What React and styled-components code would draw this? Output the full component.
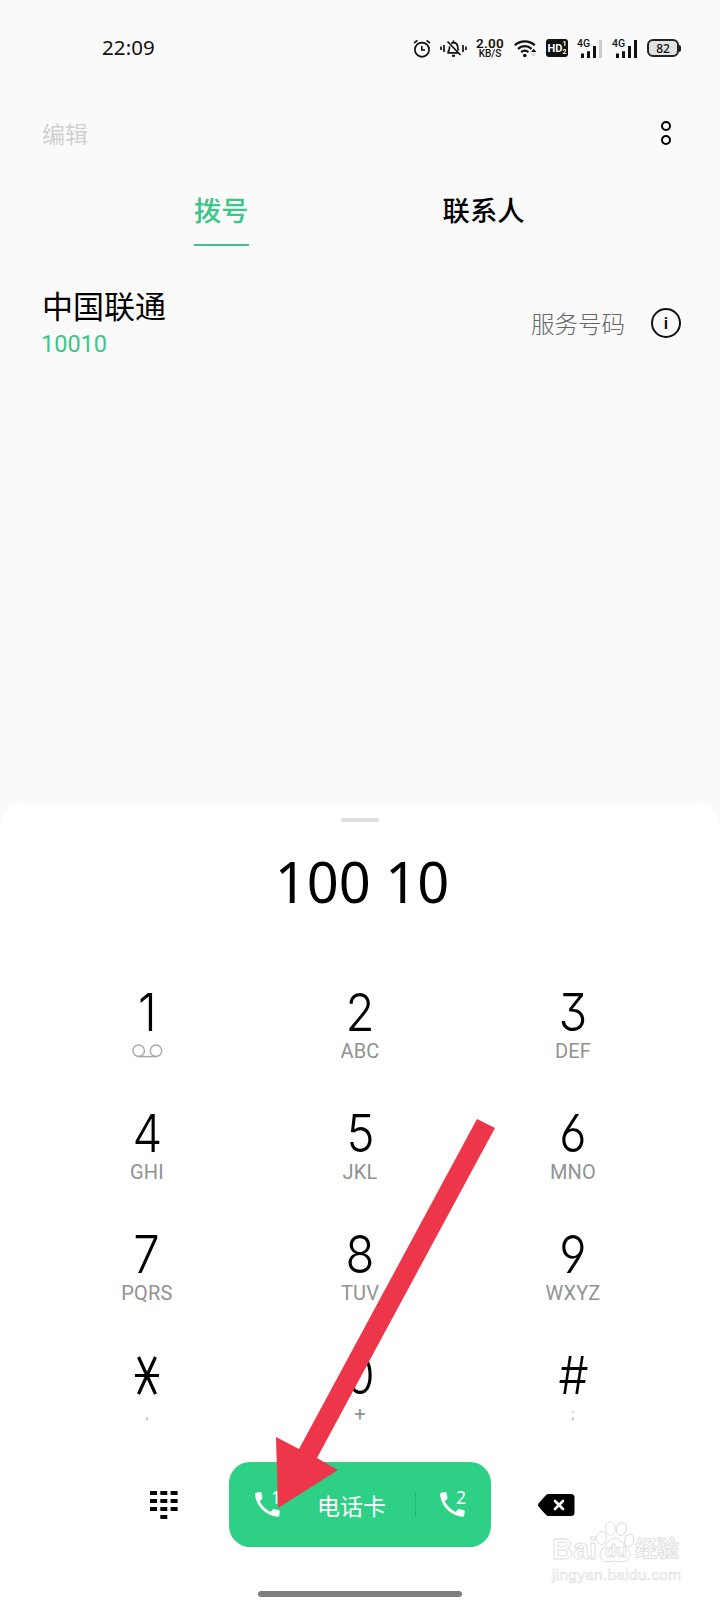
import React from 'react';
import styled, { createGlobalStyle } from 'styled-components';

const keys = [
  { digit: '1', letters: 'voicemail' },
  { digit: '2', letters: 'ABC' },
  { digit: '3', letters: 'DEF' },
  { digit: '4', letters: 'GHI' },
  { digit: '5', letters: 'JKL' },
  { digit: '6', letters: 'MNO' },
  { digit: '7', letters: 'PQRS' },
  { digit: '8', letters: 'TUV' },
  { digit: '9', letters: 'WXYZ' },
  { digit: '*', letters: ',' },
  { digit: '0', letters: '+' },
  { digit: '#', letters: ';' },
];

const AlarmIcon = () => (
  <svg width="18" height="19" viewBox="0 0 18 19" fill="none" stroke="#111" strokeWidth="1.7">
    <circle cx="9" cy="10.7" r="7.1" />
    <path d="M8.8 7v4h3.2M1 4.2 4.4 1.4M17 4.2l-3.4-2.8" />
  </svg>
);

const MutedBellIcon = () => (
  <svg width="27" height="19" viewBox="0 0 27 19" fill="none" stroke="#111" strokeWidth="1.7">
    <path d="M1 7.500v3.500M4 6v7M26 7.500v3.500M23 6v7M7.300 13.800h11.500M18.500 11.500c-.8-1.500-.6-3-.9-4.500-.4-2-2-3.300-4.100-3.300-.8 0-1.700.3-2.300.8M9.600 7.400c-.3 2.200 0 4.200-1.800 6.200M7.500 2.500l13 13.500M13.500 4V1.500" />
    <path d="M12 16.800h3" strokeWidth="2" />
  </svg>
);

const WifiIcon = () => (
  <svg width="23" height="19" viewBox="0 0 23 19" fill="none" stroke="#111" strokeWidth="2.3">
    <path d="M.8 6.200c5.800-5.200 14.200-5.200 20 0M4 9.800c4-3.500 9.600-3.500 13.600 0M7.200 13.200c2.100-1.800 5.100-1.800 7.200 0" />
    <circle cx="10.8" cy="16.500" r="1.800" fill="#111" stroke="none" />
    <path d="m17 13 2.700-3.300L22.400 13z" fill="#111" stroke="none" />
    <path d="m17 14.500 2.700 3.300 2.700-3.300z" fill="#d5d5d5" stroke="none" />
  </svg>
);

const SignalBars = ({ last }) => (
  <svg width="25" height="19" viewBox="0 0 25 19">
    <path d="M4 14.500h3V19H4zM10 12.300h3V19h-3zM16 7h3v12h-3z" fill="#111" />
    <path d="M22 1h3v18h-3z" fill={last} />
  </svg>
);

const VoicemailIcon = () => (
  <svg width="31" height="14" viewBox="0 0 31 14" fill="none" stroke="#aaa" strokeWidth="1.5">
    <circle cx="6.700" cy="6.700" r="5.700" />
    <circle cx="24" cy="6.700" r="5.700" />
    <path d="M6.700 12.600H24" />
  </svg>
);

const HandsetIcon = () => (
  <svg width="25" height="25" viewBox="0 0 25 25" fill="#fff">
    <path d="M1.200.7 5.100.1c.8-.1 1.300.3 1.500 1l.9 4.600c.1.600 0 1-.4 1.400L4.700 9.300c2.400 4.700 6.200 8.500 10.900 10.800l2.200-2.500c.4-.4.900-.6 1.500-.4l4.300.9c.7.2 1.100.7 1.100 1.400l-.4 4c-.1.800-.6 1.300-1.400 1.300C10.800 23.800.900 14.200.1 2.100c0-.8.300-1.300 1.100-1.400z" />
  </svg>
);

const KeypadIcon = () => (
  <svg width="28" height="28" viewBox="0 0 28 28" fill="#000">
    {[0, 8, 16].map((y) => [0, 10.3, 20.6].map((x) => (
      <rect key={`${x}-${y}`} x={x} y={y} width="7" height="4" />
    )))}
    <rect x="10.3" y="24" width="7" height="4" />
  </svg>
);

const BackspaceIcon = () => (
  <svg width="37" height="22" viewBox="0 0 37 22">
    <path d="M10.500 0H33q3.500 0 3.500 3.500v15Q36.500 22 33 22H10.500Q9 22 7.800 20.700L.7 12.700Q-.5 11 .7 9.300L7.800 1.300Q9 0 10.500 0z" fill="#000" />
    <path d="m17 7 8 8m0-8-8 8" stroke="#fff" strokeWidth="2.600" strokeLinecap="round" />
  </svg>
);

const PawLogo = () => (
  <svg width="40" height="44" viewBox="0 0 40 44" fill="#fff" stroke="#dcdcdc" strokeWidth="1">
    <ellipse cx="6.500" cy="18" rx="5" ry="6.500" />
    <ellipse cx="15.500" cy="8.500" rx="5" ry="6.700" />
    <ellipse cx="26.500" cy="9" rx="5" ry="6.500" transform="rotate(14 26.500 9)" />
    <ellipse cx="34" cy="20.500" rx="4.700" ry="6.300" transform="rotate(14 34 20.500)" />
    <path d="M20 18c5 0 7 4.500 10.500 8.500 3 3.300 5.500 6 4 10.500-1.500 5-6.500 5.500-14.500 4-8 1.500-13 1-14.500-4-1.500-4.500 1-7 4-10.300C13 22.500 15 18 20 18z" />
  </svg>
);

const App = () => (
  <Screen>
    <GlobalStyle />
    <StatusBar>
      <Clock>22:09</Clock>
      <StatusIcons>
        <AlarmIcon />
        <MutedBellIcon />
        <NetSpeed>
          <SpeedValue>2.00</SpeedValue>
          <SpeedUnit>KB/S</SpeedUnit>
        </NetSpeed>
        <WifiIcon />
        <HdBadge>
          HD
          <HdSims>
            <span>1</span>
            <span>2</span>
          </HdSims>
        </HdBadge>
        <Signal>
          <SignalTag>4G</SignalTag>
          <SignalBars last="#ccc" />
        </Signal>
        <Signal>
          <SignalTag>4G</SignalTag>
          <SignalBars last="#111" />
        </Signal>
        <Battery>
          <BatteryBody>82</BatteryBody>
          <BatteryTip />
        </Battery>
      </StatusIcons>
    </StatusBar>

    <Toolbar>
      <EditButton>编辑</EditButton>
      <MoreButton>
        <MoreDot />
        <MoreDot />
      </MoreButton>
    </Toolbar>

    <Tabs>
      <Tab $active>拨号</Tab>
      <Tab>联系人</Tab>
    </Tabs>

    <ContactRow>
      <ContactInfo>
        <ContactName>中国联通</ContactName>
        <ContactNumber>10010</ContactNumber>
      </ContactInfo>
      <ContactType>服务号码</ContactType>
      <InfoButton>i</InfoButton>
    </ContactRow>

    <DialPanel>
      <Handle />
      <DialedNumber>100 10</DialedNumber>
      <Keypad>
        {keys.map((key) => (
          <Key key={key.digit}>
            {key.digit === '*' ? (
              <StarSlot>
                <svg width="26" height="39" viewBox="0 0 26 39" stroke="#000" strokeWidth="3.200">
                  <path d="M1 19.500h24M4.500 1l17 37M21.500 1l-17 37" />
                </svg>
              </StarSlot>
            ) : (
              <Digit>{key.digit}</Digit>
            )}
            <Letters $faint={key.letters === ',' || key.letters === ';'}>
              {key.letters === 'voicemail' ? <VoicemailIcon /> : key.letters}
            </Letters>
          </Key>
        ))}
      </Keypad>
      <ActionRow>
        <ActionSlot>
          <KeypadIcon />
        </ActionSlot>
        <CallButton>
          <CallSim>
            <HandsetIcon />
            <SimIndex>1</SimIndex>
          </CallSim>
          <CallLabel>电话卡</CallLabel>
          <CallDivider />
          <CallSim>
            <HandsetIcon />
            <SimIndex>2</SimIndex>
          </CallSim>
        </CallButton>
        <ActionSlot>
          <BackspaceIcon />
        </ActionSlot>
      </ActionRow>
      <HomeBar />
    </DialPanel>

    <Arrow width="222" height="392" viewBox="0 0 222 392">
      <path d="M203 1 221 10 43 340 64 352 4 390 2 319 25 331z" fill="#ee364a" />
    </Arrow>

    <Watermark>
      <WatermarkTop>
        <WatermarkWord>Bai</WatermarkWord>
        <WatermarkPaw>
          <PawLogo />
          <WatermarkDu>du</WatermarkDu>
        </WatermarkPaw>
        <WatermarkCjk>经验</WatermarkCjk>
      </WatermarkTop>
      <WatermarkUrl>jingyan.baidu.com</WatermarkUrl>
    </Watermark>
  </Screen>
);

const GlobalStyle = createGlobalStyle`
  * {
    box-sizing: border-box;
  }

  body {
    margin: 0;
    background: #fafafa;
  }

  svg {
    display: block;
    flex-shrink: 0;
  }
`;

const Screen = styled.div`
  position: relative;
  display: flex;
  flex-direction: column;
  width: 720px;
  height: 1600px;
  overflow: hidden;
  background: #fafafa;
  color: #000;
  font-family: Roboto, 'Noto Sans CJK SC', sans-serif;
`;

const StatusBar = styled.header`
  display: flex;
  align-items: center;
  justify-content: space-between;
  height: 95px;
  padding: 1px 39px 0 102px;
`;

const Clock = styled.span`
  padding-bottom: 2px;
  font-family: 'Noto Sans', sans-serif;
  font-size: 20.5px;
  letter-spacing: 0.1px;
  color: #111;
`;

const StatusIcons = styled.div`
  display: flex;
  align-items: center;
  gap: 9px;
`;

const NetSpeed = styled.div`
  display: flex;
  flex-direction: column;
  align-items: center;
  width: 28px;
  margin-right: 1px;
  color: #111;
  font-family: Roboto, sans-serif;
`;

const SpeedValue = styled.span`
  font-size: 13.5px;
  font-weight: 600;
  line-height: 11px;
  letter-spacing: 0.3px;
`;

const SpeedUnit = styled.span`
  font-size: 10px;
  font-weight: 500;
  line-height: 10px;
`;

const HdBadge = styled.div`
  display: flex;
  align-items: center;
  justify-content: center;
  width: 22px;
  height: 18px;
  border-radius: 3px;
  background: #111;
  color: #fff;
  font-size: 11px;
  font-weight: 700;
`;

const HdSims = styled.span`
  display: flex;
  flex-direction: column;
  font-size: 7px;
  line-height: 8px;
`;

const Signal = styled.div`
  position: relative;
  margin-right: 1px;
`;

const SignalTag = styled.span`
  position: absolute;
  top: 0;
  left: 0;
  color: #111;
  font-size: 10.5px;
  font-weight: 500;
  line-height: 10px;
`;

const Battery = styled.div`
  display: flex;
  align-items: center;
`;

const BatteryBody = styled.div`
  display: flex;
  align-items: center;
  justify-content: center;
  width: 32px;
  height: 18px;
  border: 2px solid #222;
  border-radius: 6px;
  background: #e2e2e2;
  color: #111;
  font-family: 'Noto Sans', sans-serif;
  font-size: 12px;
  font-weight: 500;
`;

const BatteryTip = styled.div`
  width: 2px;
  height: 7px;
  border-radius: 0 2px 2px 0;
  background: #222;
`;

const Toolbar = styled.div`
  display: flex;
  align-items: center;
  justify-content: space-between;
  height: 76px;
  padding: 0 49px 0 42px;
`;

const EditButton = styled.span`
  color: #d0d0d0;
  font-size: 23px;
`;

const MoreButton = styled.div`
  display: flex;
  flex-direction: column;
  gap: 4px;
`;

const MoreDot = styled.span`
  width: 10px;
  height: 10px;
  border: 2.5px solid #000;
  border-radius: 50%;
`;

const Tabs = styled.nav`
  display: flex;
  gap: 194px;
  height: 76px;
  padding-left: 194px;
`;

const Tab = styled.span`
  align-self: flex-start;
  height: 75px;
  padding-top: 21px;
  border-bottom: 2px solid ${(props) => (props.$active ? '#42c28a' : 'transparent')};
  color: ${(props) => (props.$active ? '#3cc687' : '#000')};
  font-size: 27.3px;
  font-weight: 500;
  line-height: 40px;
`;

const ContactRow = styled.div`
  display: flex;
  align-items: center;
  height: 151px;
  padding: 0 39px 0 42px;
`;

const ContactInfo = styled.div`
  display: flex;
  flex: 1;
  flex-direction: column;
  padding-top: 3px;
`;

const ContactName = styled.span`
  font-size: 31px;
  font-weight: 400;
  line-height: 40px;
`;

const ContactNumber = styled.span`
  margin-left: -1px;
  color: #3cc68a;
  font-size: 23.5px;
  line-height: 32px;
`;

const ContactType = styled.span`
  margin-right: 26px;
  color: #666;
  font-size: 23.5px;
  font-weight: 300;
`;

const InfoButton = styled.span`
  display: flex;
  align-items: center;
  justify-content: center;
  width: 30px;
  height: 30px;
  border: 2px solid #111;
  border-radius: 50%;
  font-size: 17px;
  font-weight: 500;
`;

const DialPanel = styled.section`
  display: flex;
  flex-direction: column;
  align-items: center;
  height: 796px;
  margin-top: auto;
  border-radius: 24px 24px 0 0;
  background: #fff;
`;

const Handle = styled.div`
  width: 38px;
  height: 4px;
  margin-top: 14px;
  border-radius: 1px;
  background: #e0e0e0;
`;

const DialedNumber = styled.div`
  height: 148px;
  padding: 19px 0 0 4px;
  font-family: 'Noto Sans', sans-serif;
  font-size: 56px;
  line-height: 80px;
`;

const Keypad = styled.div`
  display: grid;
  grid-template-columns: repeat(3, 1fr);
  grid-auto-rows: 121px;
  width: 639px;
`;

const Key = styled.div`
  display: flex;
  flex-direction: column;
  align-items: center;
  padding-top: 16px;
`;

const Digit = styled.span`
  font-family: Inter, sans-serif;
  font-size: 52px;
  font-weight: 300;
  line-height: 54px;
  font-feature-settings: 'cv03', 'cv04', 'cv09';
  transform: scaleX(0.91);
`;

const StarSlot = styled.span`
  display: flex;
  align-items: center;
  height: 54px;
  padding-bottom: 1px;
`;

const Letters = styled.span`
  display: flex;
  align-items: center;
  height: 20px;
  margin-top: 1px;
  color: ${(props) => (props.$faint ? '#bbb' : '#929292')};
  font-size: ${(props) => (props.$faint ? '15px' : '20px')};
  line-height: 20px;
  letter-spacing: 0.2px;
`;

const ActionRow = styled.div`
  display: flex;
  align-items: center;
  width: 522px;
  height: 86px;
  margin-top: 7px;
`;

const ActionSlot = styled.div`
  display: flex;
  flex: 1;
  justify-content: center;
  padding-top: 2px;
`;

const CallButton = styled.div`
  display: flex;
  align-items: center;
  width: 262px;
  height: 85px;
  padding: 1px 26px 0;
  border-radius: 21px;
  background: #2dd084;
`;

const CallSim = styled.div`
  position: relative;
`;

const SimIndex = styled.span`
  position: absolute;
  top: -4px;
  right: -1px;
  color: #fff;
  font-family: 'Noto Sans', sans-serif;
  font-size: 17.5px;
  line-height: 18px;
`;

const CallLabel = styled.span`
  flex: 1;
  padding-left: 37px;
  color: #fff;
  font-size: 23px;
`;

const CallDivider = styled.span`
  width: 1px;
  height: 24px;
  margin-right: 24px;
  background: #27b573;
`;

const HomeBar = styled.div`
  width: 204px;
  height: 6px;
  margin-top: 44px;
  border-radius: 3px;
  background: #808080;
`;

/* hint arrow pointing at the first SIM */
const Arrow = styled.svg`
  position: absolute;
  top: 1118px;
  left: 274px;
`;

const Watermark = styled.div`
  position: absolute;
  top: 1520px;
  left: 552px;
  width: 132px;
  color: #fff;
  -webkit-text-stroke: 0.9px #dedede;
`;

const WatermarkTop = styled.div`
  display: flex;
  align-items: flex-end;
  height: 44px;
`;

const WatermarkWord = styled.span`
  width: 43px;
  font-family: 'Liberation Sans', sans-serif;
  font-size: 29px;
  font-weight: 700;
  line-height: 30px;
`;

const WatermarkPaw = styled.div`
  position: relative;
  width: 40px;
`;

const WatermarkDu = styled.span`
  position: absolute;
  left: 10px;
  bottom: 3px;
  font-family: 'Liberation Sans', sans-serif;
  font-size: 18px;
  font-weight: 700;
  line-height: 20px;
`;

const WatermarkCjk = styled.span`
  font-size: 22px;
  font-weight: 700;
  line-height: 30px;
  white-space: nowrap;
`;

const WatermarkUrl = styled.div`
  margin-top: 2px;
  font-family: 'Liberation Sans', sans-serif;
  font-size: 15.5px;
  line-height: 18px;
  letter-spacing: 0.25px;
  -webkit-text-stroke: 0.6px #dedede;
`;

export default App;
